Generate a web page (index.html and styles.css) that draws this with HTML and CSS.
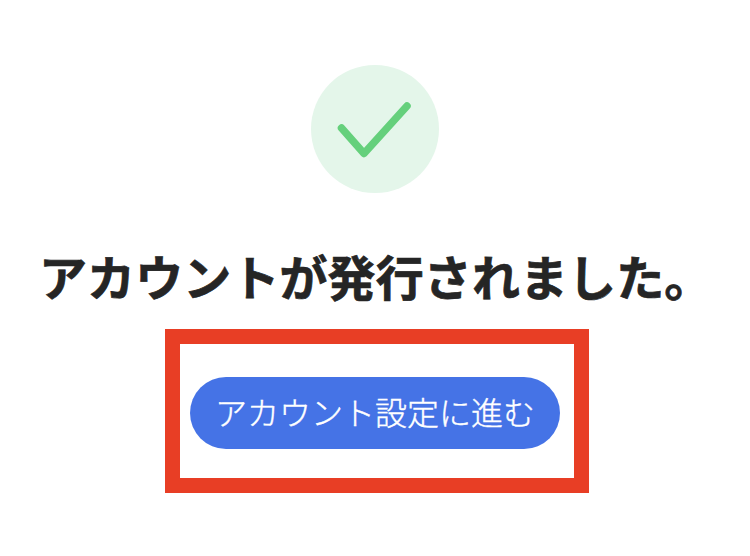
FILE: index.html
```
<!DOCTYPE html>
<html lang="ja">

<head>
    <meta charset="utf-8">
    <title>アカウント発行</title>
    <link rel="stylesheet" href="styles.css">
</head>

<body>
    <div class="page">
        <div class="check">
            <svg width="128" height="128" viewBox="0 0 128 128">
                <path d="M30.5 63 L53 88.5 L96 41" />
            </svg>
        </div>
        <h1 class="title">アカウントが発行されました。</h1>
        <div class="frame">
            <button class="btn" type="button">アカウント設定に進む</button>
        </div>
    </div>
</body>

</html>
```

FILE: styles.css
```
* {
    margin: 0;
    padding: 0;
    box-sizing: border-box;
}

body {
    background-color: #fff;
    font-family: "Noto Sans CJK JP", sans-serif;
}

.page {
    width: 750px;
    height: 556px;
    padding-top: 65px;
    overflow: hidden;
}

.check {
    width: 128px;
    height: 128px;
    margin-left: 311px;
    border-radius: 50%;
    background-color: #e4f6ea;
}

.check svg {
    display: block;
}

.check path {
    fill: none;
    stroke: #65d07c;
    stroke-width: 7.5;
    stroke-linecap: round;
    stroke-linejoin: round;
}

.title {
    height: 70px;
    margin: 47px 0 19px 39px;
    color: #252525;
    font-size: 48px;
    font-weight: bold;
    letter-spacing: 0.1px;
    line-height: 70px;
    white-space: nowrap;
    -webkit-text-stroke: 0.7px #252525;
}

.frame {
    display: flex;
    width: 424px;
    height: 164px;
    margin-left: 165px;
    padding: 33px 0 0 10px;
    border: 15px solid #e83e25;
}

.btn {
    width: 370px;
    height: 72px;
    padding-bottom: 4px;
    border: none;
    border-radius: 36px;
    background-color: #4573e6;
    color: #fff;
    font-family: inherit;
    font-size: 32px;
    font-weight: 300;
    line-height: 68px;
    white-space: nowrap;
    -webkit-text-stroke: 0.4px #fff;
}
```
